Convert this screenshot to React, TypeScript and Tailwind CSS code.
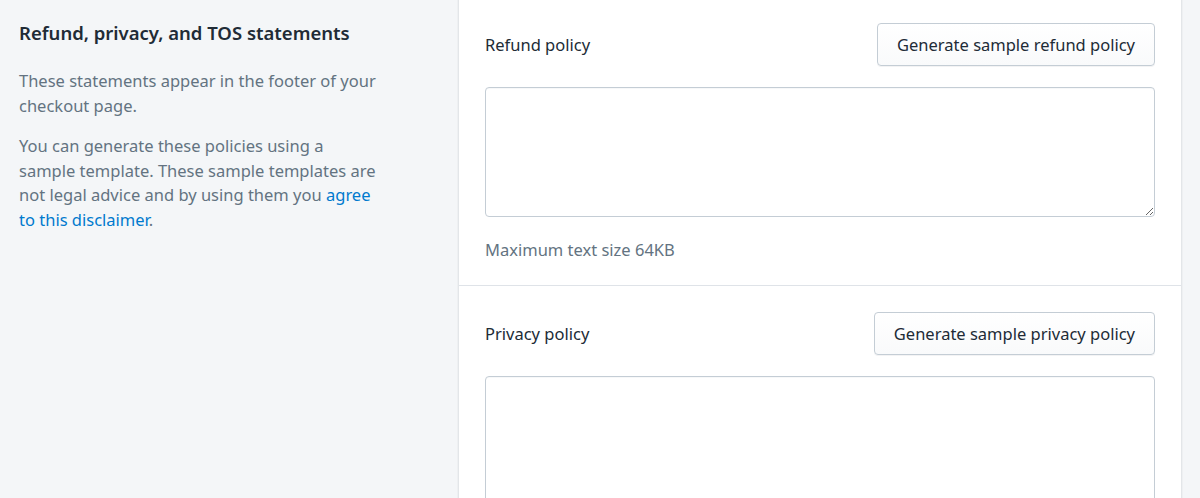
import { useState } from 'react';

const sans = 'font-["Noto_Sans","Open_Sans",sans-serif]';

function PolicyField({
  label,
  buttonText,
  helpText,
  first,
}: {
  label: string;
  buttonText: string;
  helpText?: string;
  first?: boolean;
}) {
  const [value, setValue] = useState('');
  return (
    <div className={`px-[26px] ${first ? 'pt-[23px] pb-[23px]' : 'pt-[26px] pb-[24px] border-t border-[#dfe3e8]'}`}>
      <div className="flex items-center justify-between">
        <span className="text-[#212b36]">{label}</span>
        <button
          type="button"
          className="h-[43px] px-[19px] rounded-[4px] border border-[#c4cdd5] bg-gradient-to-b from-white to-[#f9fafb] text-[#212b36] shadow-[0_1px_0_rgba(22,29,37,0.05)]"
        >
          {buttonText}
        </button>
      </div>
      <textarea
        value={value}
        onChange={(e) => setValue(e.target.value)}
        className={`mt-[21px] block w-full rounded-[4px] border border-[#c4cdd5] bg-white shadow-[inset_0_1px_0_rgba(99,115,129,0.05)] outline-none ${first ? 'h-[130px]' : 'h-[150px]'}`}
      />
      {helpText && <p className="mt-[21px] text-[#637381]">{helpText}</p>}
    </div>
  );
}

export default function App() {
  return (
    <div className={`min-h-screen h-[498px] overflow-hidden bg-[#f4f6f8] ${sans} text-[16.5px] leading-[24px]`}>
      <div className="flex">
        {/* Description column */}
        <div className="w-[458px] shrink-0 pl-[19px] pt-[21px]">
          <h2 className="text-[18.5px] font-semibold text-[#212b36]">Refund, privacy, and TOS statements</h2>
          <div className="mt-[24px] w-[360px] leading-[24.5px] text-[#637381]">
            <p>These statements appear in the footer of your checkout page.</p>
            <p className="mt-[16px]">
              You can generate these policies using a sample template. These sample templates are not legal
              advice and by using them you{' '}
              <a href="#" className="text-[#007ace]">
                agree to this disclaimer
              </a>
              .
            </p>
          </div>
        </div>

        {/* Card */}
        <div className="w-[724px] shrink-0 bg-white border-x border-[#e3e6e9] shadow-[0_0_0_1px_rgba(63,63,68,0.03)]">
          <PolicyField
            first
            label="Refund policy"
            buttonText="Generate sample refund policy"
            helpText="Maximum text size 64KB"
          />
          <PolicyField label="Privacy policy" buttonText="Generate sample privacy policy" />
        </div>
      </div>
    </div>
  );
}
